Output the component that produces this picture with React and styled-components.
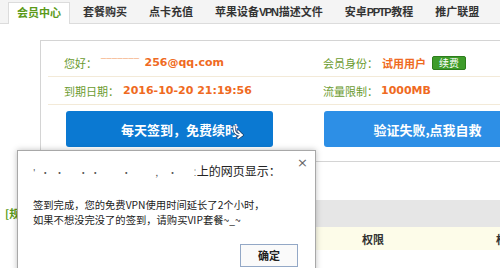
import React from "react";
import styled, { createGlobalStyle } from "styled-components";

const tabs = ["会员中心", "套餐购买", "点卡充值", "苹果设备VPN描述文件", "安卓PPTP教程", "推广联盟"];

// split a label so the latin runs can be set a little tighter
const splitLatin = (text) =>
  text.split(/([A-Za-z]+)/).map((part, i) => (/^[A-Za-z]+$/.test(part) ? <Latin key={i}>{part}</Latin> : part));

function App() {
  return (
    <>
      <GlobalStyle />
      <Page>
        <TabBar>
          {tabs.map((t, i) => (
            <Tab key={t} active={i === 0}>
              {splitLatin(t)}
            </Tab>
          ))}
        </TabBar>

        <Main>
          <Panel>
            <InfoRow>
              <Cell>
                <Label>您好：</Label>
                <Mask>‾‾‾‾‾‾‾</Mask>
                <Value>256@qq.com</Value>
              </Cell>
              <Cell>
                <Label>会员身份：</Label>
                <Value>试用用户</Value>
                <RenewButton>续费</RenewButton>
              </Cell>
            </InfoRow>
            <InfoRow>
              <Cell>
                <Label>到期日期：</Label>
                <Value>2016-10-20 21:19:56</Value>
              </Cell>
              <Cell>
                <Label>流量限制：</Label>
                <Value spaced>1000MB</Value>
              </Cell>
            </InfoRow>
            <ActionRow>
              <ActionButton dark shift>
                每天签到，免费续时
                <Cursor viewBox="0 0 12 14" width="12" height="14">
                  <path d="M2 1 C2 7 3 10 10 10" fill="none" stroke="#1a3c66" strokeWidth="3" strokeLinecap="round" />
                  <path d="M6 6 L10 10 L6 13" fill="none" stroke="#1a3c66" strokeWidth="3" strokeLinecap="round" strokeLinejoin="round" />
                  <path d="M2 1 C2 7 3 10 10 10" fill="none" stroke="#fff" strokeWidth="1.6" strokeLinecap="round" />
                  <path d="M6 6 L10 10 L6 13" fill="none" stroke="#fff" strokeWidth="1.6" strokeLinecap="round" strokeLinejoin="round" />
                </Cursor>
              </ActionButton>
              <ActionButton>验证失败,点我自救</ActionButton>
            </ActionRow>
          </Panel>

          <Lower>
            <Note>[规则]</Note>
            <Table>
              <HeadBar />
              <TableRow>
                <Th>套餐名称</Th>
                <Th>权限</Th>
                <Th>权益</Th>
              </TableRow>
            </Table>
          </Lower>
        </Main>

        <Dialog>
          <DialogTitle>
            <Redacted>{"'  ·  ·      · ·         ·          ,    ·       ⁚"}</Redacted>
            上的网页显示：
          </DialogTitle>
          <Close>×</Close>
          <DialogBody>
            签到完成，您的免费VPN使用时间延长了2个小时，
            <br />
            如果不想没完没了的签到，请购买VIP套餐~_~
          </DialogBody>
          <DialogFooter>
            <OkButton>确定</OkButton>
          </DialogFooter>
        </Dialog>
      </Page>
    </>
  );
}

export default App;

const GlobalStyle = createGlobalStyle`
  html, body {
    margin: 0;
    padding: 0;
    background: #fff;
  }
  body {
    width: 500px;
    height: 268px;
    overflow: hidden;
    font-family: "Noto Sans CJK SC", "Liberation Sans", sans-serif;
    font-size: 11px;
    color: #333;
  }
`;

const Page = styled.div`
  position: relative;
  width: 500px;
  height: 268px;
  overflow: hidden;
`;

const TabBar = styled.div`
  display: flex;
  gap: 4px;
  height: 21px;
  padding: 2px 0 0 8px;
  background: #f4f4f4;
  border-bottom: 1px solid #dcdcdc;
`;

const Tab = styled.div`
  box-sizing: border-box;
  height: 22px;
  margin-bottom: -1px;
  padding: 0 ${({ active }) => (active ? "8px" : "9px")};
  line-height: 21px;
  font-family: "Liberation Sans", "Noto Sans CJK SC", sans-serif;
  font-weight: bold;
  font-size: 11px;
  white-space: nowrap;
  color: ${({ active }) => (active ? "#5a9a18" : "#333")};
  background: ${({ active }) => (active ? "#fff" : "transparent")};
  border: ${({ active }) => (active ? "1px solid #dcdcdc" : "none")};
  border-bottom: none;
`;

const Latin = styled.span`
  letter-spacing: -1.3px;
  margin-right: 1px;
`;

const Main = styled.div`
  padding-top: 16px;
`;

const Panel = styled.div`
  margin-left: 40px;
  width: 560px;
  border: 1px solid #d4d4d4;
  padding: 8px 0 14px 7px;
`;

const InfoRow = styled.div`
  display: grid;
  grid-template-columns: 259px 1fr;
  align-items: center;
  height: 27px;
  padding-left: 16px;
  border-bottom: 1px solid #f3ead8;
`;

const Cell = styled.div`
  display: flex;
  align-items: center;
  white-space: nowrap;
`;

const Label = styled.span`
  color: #6b9b30;
  font-size: 11px;
`;

const Mask = styled.span`
  color: #f6b48c;
  font-family: "DejaVu Sans", sans-serif;
  font-size: 10px;
  letter-spacing: 0.5px;
  margin: 0 1px 0 4px;
`;

const Value = styled.span`
  color: #ef6a22;
  font-family: "DejaVu Sans", "Noto Sans CJK SC", sans-serif;
  font-weight: bold;
  font-size: 11px;
  margin-left: ${({ spaced }) => (spaced ? "3px" : "4px")};
`;

const RenewButton = styled.span`
  margin-left: 6px;
  padding: 0 6px;
  height: 12px;
  line-height: 12px;
  font-size: 10px;
  color: #fff;
  background: #3e9c2a;
  border: 1px solid #2d7d1c;
  border-radius: 2px;
`;

const ActionRow = styled.div`
  display: grid;
  grid-template-columns: 207px 207px;
  gap: 51px;
  margin: 6px 0 0 18px;
`;

const ActionButton = styled.div`
  position: relative;
  height: 36px;
  display: flex;
  align-items: center;
  justify-content: center;
  padding-left: ${({ shift }) => (shift ? "20px" : "0")};
  box-sizing: border-box;
  border-radius: 3px;
  background: ${({ dark }) => (dark ? "#0b79d2" : "#2d8fe6")};
  color: #fff;
  font-size: 13px;
  font-weight: bold;
  white-space: nowrap;
`;

const Cursor = styled.svg`
  position: absolute;
  left: 166px;
  top: 14px;
`;

const Lower = styled.div`
  display: flex;
  padding-top: 38px;
`;

const Note = styled.div`
  flex-shrink: 0;
  width: 35px;
  padding-left: 5px;
  height: 27px;
  line-height: 27px;
  color: #5a9a18;
  font-weight: bold;
  white-space: nowrap;
  overflow: hidden;
  background: #fff;
`;

const Table = styled.div`
  flex-shrink: 0;
  width: 551px;
`;

const HeadBar = styled.div`
  height: 27px;
  background: #e6e6e6;
`;

const TableRow = styled.div`
  display: grid;
  grid-template-columns: 283px 100px 168px;
  height: 23px;
  align-items: center;
  background: #fdfce9;
`;

const Th = styled.div`
  text-align: center;
  font-weight: bold;
  font-size: 11px;
  color: #333;
`;

const Dialog = styled.div`
  position: absolute;
  left: 17px;
  top: 150px;
  width: 297px;
  height: 140px;
  background: #fff;
  border: 1px solid #a8a8a8;
  box-shadow: 0 0 6px rgba(0, 0, 0, 0.25);
`;

const DialogTitle = styled.div`
  padding: 10px 0 0 15px;
  height: 20px;
  line-height: 20px;
  font-size: 12px;
  color: #222;
  white-space: nowrap;
`;

const Redacted = styled.span`
  white-space: pre;
  font-size: 9px;
  color: #555;
  letter-spacing: 0.4px;
`;

const Close = styled.span`
  position: absolute;
  right: 7px;
  top: 4px;
  font-size: 13px;
  color: #666;
  font-family: "DejaVu Sans", sans-serif;
`;

const DialogBody = styled.div`
  margin-top: 16px;
  padding: 0 15px;
  font-size: 10.3px;
  line-height: 15px;
  color: #222;
  white-space: nowrap;
`;

const DialogFooter = styled.div`
  display: flex;
  justify-content: flex-end;
  padding-right: 17px;
  margin-top: 17px;
`;

const OkButton = styled.div`
  width: 58px;
  height: 23px;
  box-sizing: border-box;
  line-height: 21px;
  text-align: center;
  border: 1px solid #93a8c6;
  background: #fafafa;
  font-weight: bold;
  font-size: 11px;
  color: #222;
`;
